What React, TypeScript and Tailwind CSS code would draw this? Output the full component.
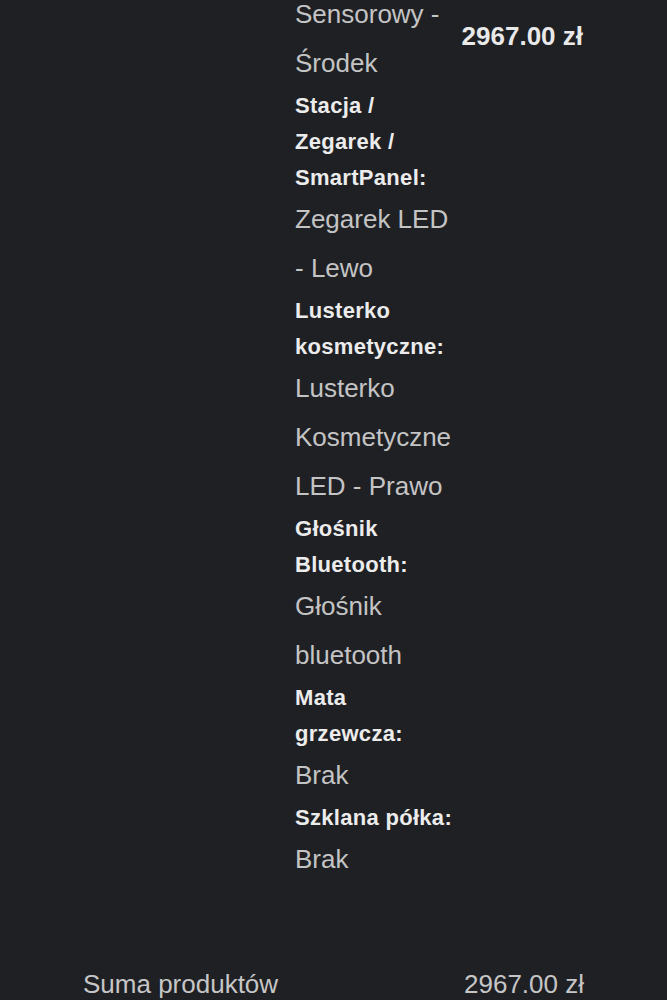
const options = [
    { label: "Stacja / Zegarek / SmartPanel:", value: "Zegarek LED - Lewo" },
    { label: "Lusterko kosmetyczne:", value: "Lusterko Kosmetyczne LED - Prawo" },
    { label: "Głośnik Bluetooth:", value: "Głośnik bluetooth" },
    { label: "Mata grzewcza:", value: "Brak" },
    { label: "Szklana półka:", value: "Brak" },
];

export default function App() {
    return (
        <div className="h-[1000px] overflow-hidden bg-[#1f2024] font-['Liberation_Sans',Arial,sans-serif]">
            <div className="grid grid-cols-[295px_163px_1fr] -mt-[10px]">
                <div />
                <div className="flex flex-col">
                    <div className="text-[26px] leading-[49px] text-[#c4c4c4]">Sensorowy - Środek</div>
                    {options.map((o) => (
                        <div key={o.label} className="flex flex-col">
                            <div className="text-[22px] leading-[36px] font-bold tracking-[0.3px] text-[#ececec]">{o.label}</div>
                            <div className="text-[26px] leading-[49px] -mt-[1px] text-[#c4c4c4]">{o.value}</div>
                        </div>
                    ))}
                </div>
                <div className="pt-[31px] pr-[84px] text-right">
                    <span className="text-[26px] leading-[30px] font-bold text-[#e9e9e9]">2967.00 zł</span>
                </div>
            </div>
            <div className="mt-[76px] flex justify-between px-[83px] text-[26px] leading-[49px] text-[#c6c6c6]">
                <span>Suma produktów</span>
                <span>2967.00 zł</span>
            </div>
        </div>
    );
}
